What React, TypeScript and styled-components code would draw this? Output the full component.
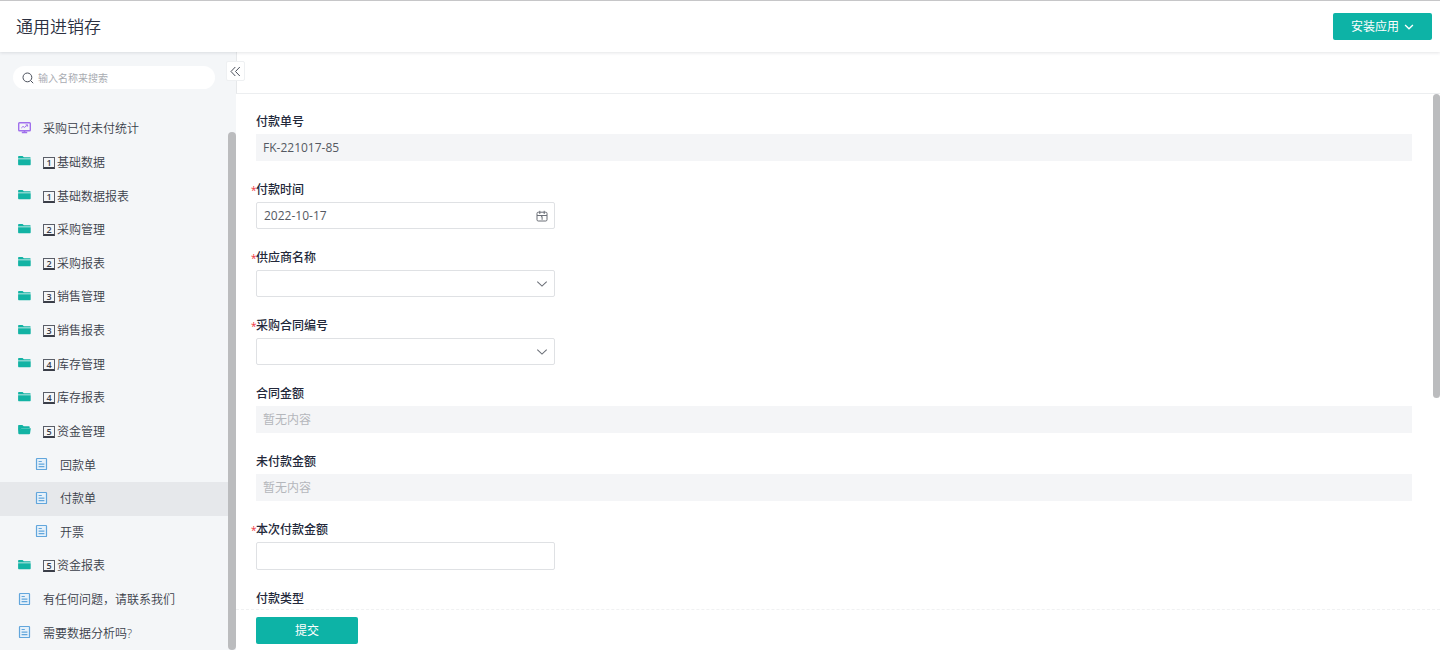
import React, { useState } from "react";
import styled, { createGlobalStyle } from "styled-components";

const GlobalStyle = createGlobalStyle`
  *, *::before, *::after { box-sizing: border-box; }
  body {
    margin: 0;
    background: #fff;
    color: #3a3f4b;
    font-family: "Open Sans", "Noto Sans CJK SC", sans-serif;
    font-size: 12px;
    line-height: 18px;
  }
  button, input, select { font: inherit; color: inherit; margin: 0; }
`;

const Page = styled.div`
  height: 100vh;
  display: flex;
  flex-direction: column;
  overflow: hidden;
`;

const Header = styled.header`
  flex: none;
  z-index: 1;
  display: flex;
  align-items: center;
  justify-content: space-between;
  height: 52px;
  padding: 0 8px 0 16px;
  border-top: 1px solid #c6c6c8;
  background: #fff;
  box-shadow: 0 1px 3px rgba(30, 40, 60, 0.12);
`;

const Title = styled.h1`
  margin: 0;
  font-size: 17px;
  line-height: 26px;
  font-weight: 350;
  color: #2b2f40;
`;

const PrimaryButton = styled.button<{ $width: number }>`
  display: flex;
  align-items: center;
  justify-content: center;
  gap: 5px;
  width: ${(p) => p.$width}px;
  height: 27px;
  padding: 0;
  border: 0;
  border-radius: 2px;
  background: #0db3a6;
  color: #fff;
  cursor: pointer;
`;

const Body = styled.div`
  flex: 1;
  min-height: 0;
  display: flex;
`;

const Sidebar = styled.aside`
  position: relative;
  flex: none;
  display: flex;
  flex-direction: column;
  width: 236px;
  background: #f4f6f8;
`;

const SearchBox = styled.label`
  flex: none;
  display: flex;
  align-items: center;
  gap: 4px;
  height: 23px;
  margin: 14px 21px 22px 13px;
  padding: 0 9px;
  border-radius: 12px;
  background: #fff;
  color: #4b505c;
`;

const SearchInput = styled.input`
  flex: 1;
  min-width: 0;
  height: 18px;
  padding: 0;
  border: 0;
  outline: 0;
  background: transparent;
  font-size: 10px;
  &::placeholder { color: #a9acb2; opacity: 1; }
`;

const CollapseButton = styled.button`
  position: absolute;
  top: 9px;
  right: -9px;
  display: flex;
  align-items: center;
  justify-content: center;
  width: 19px;
  height: 20px;
  padding: 0;
  border: 1px solid #eef0f2;
  border-radius: 2px;
  background: #fff;
  color: #4b505c;
  cursor: pointer;
`;

const SidebarScroll = styled.div`
  flex: 1;
  min-height: 0;
  display: flex;
`;

const Nav = styled.nav`
  flex: 1;
  overflow-y: auto;
  scrollbar-width: none;
`;

const NavList = styled.ul`
  display: grid;
  grid-auto-rows: minmax(33px, 1fr);
  min-height: 100%;
  margin: 0;
  padding: 1px 0 0;
  list-style: none;
`;

const NavLink = styled.a<{ $nested?: boolean; $active?: boolean }>`
  display: flex;
  align-items: center;
  gap: 10px;
  height: 100%;
  padding-left: ${(p) => (p.$nested ? 34 : 17)}px;
  background: ${(p) => (p.$active ? "#e6e8eb" : "transparent")};
  color: #3a3e4a;
  font-weight: 350;
  text-decoration: none;
  white-space: nowrap;
  svg { flex: none; }
`;

const NavText = styled.span`
  display: flex;
  align-items: center;
  gap: 2px;
  padding-top: 1px;
`;

const KeyCap = styled.span`
  width: 12px;
  height: 12px;
  border: 1px solid #5a5e68;
  border-bottom: 2px solid #3a3e48;
  font-size: 9px;
  font-weight: 600;
  line-height: 9px;
  text-align: center;
`;

const Thumb = styled.div<{ $width: number; $top: number; $height: string }>`
  flex: none;
  width: ${(p) => p.$width}px;
  height: ${(p) => p.$height};
  margin-top: ${(p) => p.$top}px;
  border-radius: 4px;
  background: #bbbcbe;
`;

const Main = styled.main`
  flex: 1;
  min-width: 0;
  display: flex;
  flex-direction: column;
`;

const Toolbar = styled.div`
  flex: none;
  height: 42px;
  border-left: 1px solid #e6e8ea;
  border-bottom: 1px solid #eceef0;
`;

const Form = styled.form`
  flex: 1;
  min-height: 0;
  display: flex;
  flex-direction: column;
`;

const FormScroll = styled.div`
  flex: 1;
  min-height: 0;
  display: flex;
`;

const Fields = styled.div`
  flex: 1;
  display: flex;
  flex-direction: column;
  gap: 19px;
  padding: 18px 21px 18px 20px;
  overflow-y: auto;
  scrollbar-width: none;
`;

const Field = styled.div`
  flex: none;
  display: flex;
  flex-direction: column;
  gap: 2px;
`;

const Label = styled.label`
  display: flex;
  height: 20px;
  line-height: 20px;
  font-weight: 500;
  color: #23283a;
`;

const Star = styled.span`
  width: 5px;
  margin-left: -5px;
  font-size: 10px;
  color: #f0303c;
`;

const ReadOnlyInput = styled.input`
  width: 100%;
  height: 27px;
  padding: 0 7px;
  border: 0;
  outline: 0;
  background: #f4f5f7;
  color: #555962;
  &::placeholder { color: #b4b7bc; opacity: 1; }
`;

const Box = styled.div<{ $tall?: boolean }>`
  display: flex;
  align-items: center;
  width: 299px;
  max-width: 100%;
  height: ${(p) => (p.$tall ? 28 : 27)}px;
  border: 1px solid #dfe1e4;
  border-radius: 2px;
  background: #fff;
  color: #6b6f77;
`;

const BoxInput = styled.input`
  flex: 1;
  min-width: 0;
  height: 100%;
  padding: 0 7px;
  border: 0;
  outline: 0;
  background: transparent;
  color: #555962;
`;

const BoxIcon = styled.span`
  display: flex;
  padding-right: 6px;
`;

const SelectGrid = styled(Box)`
  display: grid;
  > * { grid-area: 1 / 1; }
`;

const Select = styled.select`
  width: 100%;
  height: 25px;
  padding: 0 28px 0 7px;
  border: 0;
  outline: 0;
  appearance: none;
  background: transparent;
  color: #555962;
`;

const SelectIcon = styled(BoxIcon)`
  justify-self: end;
  pointer-events: none;
`;

const Footer = styled.footer`
  flex: none;
  padding: 7px 20px 6px;
  border-top: 1px dashed #f0f1f2;
`;

const FolderIcon = ({ open }: { open?: boolean }) => (
  <svg width="16" height="16" viewBox="0 0 16 16" fill="#12b3a4">
    {open ? (
      <>
        <path d="M1.1 3c0-.6.4-1 1-1h3.3l1.3 1.2h5c.6 0 1 .4 1 1v.7H4.4L2.6 9.4 1.1 6z" />
        <path d="M3.9 5.3h9.9l-.7 5c-.1.6-.5.9-1 .9H2.6c-.7 0-1.2-.4-1.3-1L1.1 5l1.5 3z" />
      </>
    ) : (
      <>
        <path d="M1.1 3c0-.6.4-1 1-1h3.5l1.2 1.2h5.9c.6 0 1 .4 1 1v.4H1.1z" />
        <path d="M1.1 5.2h12.6v5c0 .6-.4 1-1 1H2.1c-.6 0-1-.4-1-1z" />
      </>
    )}
  </svg>
);

const DocIcon = () => (
  <svg width="16" height="16" viewBox="0 0 16 16" fill="none" stroke="#62a6dc">
    <rect x="2.5" y="1.5" width="10" height="11" rx=".6" strokeWidth="1.2" fill="#e6f1fa" />
    <path d="M4.6 4.5h3.2M4.6 7.1h5.8M4.6 9.6h5.8" strokeWidth="1.1" />
  </svg>
);

const ScreenIcon = () => (
  <svg width="16" height="16" viewBox="0 0 16 16" fill="none" stroke="#a070ec">
    <rect x="1.7" y="1.7" width="11.6" height="8" rx=".8" strokeWidth="1.4" />
    <path d="M4.3 7 6 5.4l1.5 1L10.4 4M8.6 3.9h2v1.7" strokeWidth="1" />
    <path d="M7.5 9.8v1.6M4.8 11.5h5.4" strokeWidth="1.6" />
  </svg>
);

const SearchIcon = () => (
  <svg width="12" height="12" viewBox="0 0 12 12" fill="none" stroke="currentColor">
    <circle cx="5.4" cy="5.4" r="4.4" />
    <path d="m8.6 8.6 2.6 2.6" />
  </svg>
);

const CollapseIcon = () => (
  <svg width="11" height="11" viewBox="0 0 11 11" fill="none" stroke="currentColor">
    <path d="M5.3 1 1 5.5 5.3 10M9.8 1 5.5 5.5 9.8 10" />
  </svg>
);

const ChevronIcon = ({ size, weight }: { size: number; weight: number }) => (
  <svg width={size} height={size} viewBox="0 0 12 12" fill="none" stroke="currentColor" strokeWidth={weight}>
    <path d="m1.3 3.7 4.7 4.4 4.7-4.4" />
  </svg>
);

const CalendarIcon = () => (
  <svg width="12" height="12" viewBox="0 0 12 12" fill="none" stroke="currentColor">
    <rect x="1" y="2.2" width="10" height="8.8" rx="1.2" />
    <path d="M1 5.5h10M3.8.8v3.2M8.2.8v3.2M4.9 7l1.2-.6v3.4" />
  </svg>
);

type Item = {
  icon: "screen" | "folder" | "open" | "doc";
  text: string;
  cap?: number;
  nested?: boolean;
};

const items: Item[] = [
  { icon: "screen", text: "采购已付未付统计" },
  { icon: "folder", cap: 1, text: "基础数据" },
  { icon: "folder", cap: 1, text: "基础数据报表" },
  { icon: "folder", cap: 2, text: "采购管理" },
  { icon: "folder", cap: 2, text: "采购报表" },
  { icon: "folder", cap: 3, text: "销售管理" },
  { icon: "folder", cap: 3, text: "销售报表" },
  { icon: "folder", cap: 4, text: "库存管理" },
  { icon: "folder", cap: 4, text: "库存报表" },
  { icon: "open", cap: 5, text: "资金管理" },
  { icon: "doc", text: "回款单", nested: true },
  { icon: "doc", text: "付款单", nested: true },
  { icon: "doc", text: "开票", nested: true },
  { icon: "folder", cap: 5, text: "资金报表" },
  { icon: "doc", text: "有任何问题，请联系我们" },
  { icon: "doc", text: "需要数据分析吗?" },
];

const ItemIcon = ({ kind }: { kind: Item["icon"] }) => {
  if (kind === "screen") return <ScreenIcon />;
  if (kind === "doc") return <DocIcon />;
  return <FolderIcon open={kind === "open"} />;
};

type FieldDef = {
  id: string;
  label: string;
  kind: "readonly" | "date" | "select" | "text";
  required?: boolean;
  value?: string;
};

const fields: FieldDef[] = [
  { id: "number", label: "付款单号", kind: "readonly", value: "FK-221017-85" },
  { id: "date", label: "付款时间", kind: "date", required: true, value: "2022-10-17" },
  { id: "supplier", label: "供应商名称", kind: "select", required: true },
  { id: "contract", label: "采购合同编号", kind: "select", required: true },
  { id: "total", label: "合同金额", kind: "readonly" },
  { id: "unpaid", label: "未付款金额", kind: "readonly" },
  { id: "amount", label: "本次付款金额", kind: "text", required: true },
  { id: "type", label: "付款类型", kind: "select" },
];

const Control = ({ field }: { field: FieldDef }) => {
  switch (field.kind) {
    case "readonly":
      return <ReadOnlyInput id={field.id} readOnly defaultValue={field.value} placeholder="暂无内容" />;
    case "select":
      return (
        <SelectGrid>
          <Select id={field.id} defaultValue="">
            <option value="" />
          </Select>
          <SelectIcon><ChevronIcon size={12} weight={1.1} /></SelectIcon>
        </SelectGrid>
      );
    default:
      return (
        <Box $tall={field.kind === "text"}>
          <BoxInput id={field.id} type="text" defaultValue={field.value} />
          {field.kind === "date" && <BoxIcon><CalendarIcon /></BoxIcon>}
        </Box>
      );
  }
};

export default function App() {
  const [active, setActive] = useState("付款单");
  return (
    <Page>
      <GlobalStyle />
      <Header>
        <Title>通用进销存</Title>
        <PrimaryButton type="button" $width={99}>
          安装应用
          <ChevronIcon size={10} weight={1.6} />
        </PrimaryButton>
      </Header>
      <Body>
        <Sidebar>
          <SearchBox>
            <SearchIcon />
            <SearchInput type="text" aria-label="搜索" placeholder="输入名称来搜索" />
          </SearchBox>
          <SidebarScroll>
            <Nav>
              <NavList>
                {items.map((item) => (
                  <li key={item.text}>
                    <NavLink
                      href="#"
                      $nested={item.nested}
                      $active={item.text === active}
                      onClick={() => setActive(item.text)}
                    >
                      <ItemIcon kind={item.icon} />
                      <NavText>
                        {item.cap && <KeyCap>{item.cap}</KeyCap>}
                        {item.text}
                      </NavText>
                    </NavLink>
                  </li>
                ))}
              </NavList>
            </Nav>
            <Thumb $width={8} $top={21} $height="auto" />
          </SidebarScroll>
          <CollapseButton type="button" aria-label="收起">
            <CollapseIcon />
          </CollapseButton>
        </Sidebar>
        <Main>
          <Toolbar />
          <Form onSubmit={(e) => e.preventDefault()}>
            <FormScroll>
              <Fields>
                {fields.map((field) => (
                  <Field key={field.id}>
                    <Label htmlFor={field.id}>
                      {field.required && <Star>*</Star>}
                      {field.label}
                    </Label>
                    <Control field={field} />
                  </Field>
                ))}
              </Fields>
              <Thumb $width={7} $top={0} $height="59%" />
            </FormScroll>
            <Footer>
              <PrimaryButton type="submit" $width={102}>提交</PrimaryButton>
            </Footer>
          </Form>
        </Main>
      </Body>
    </Page>
  );
}
